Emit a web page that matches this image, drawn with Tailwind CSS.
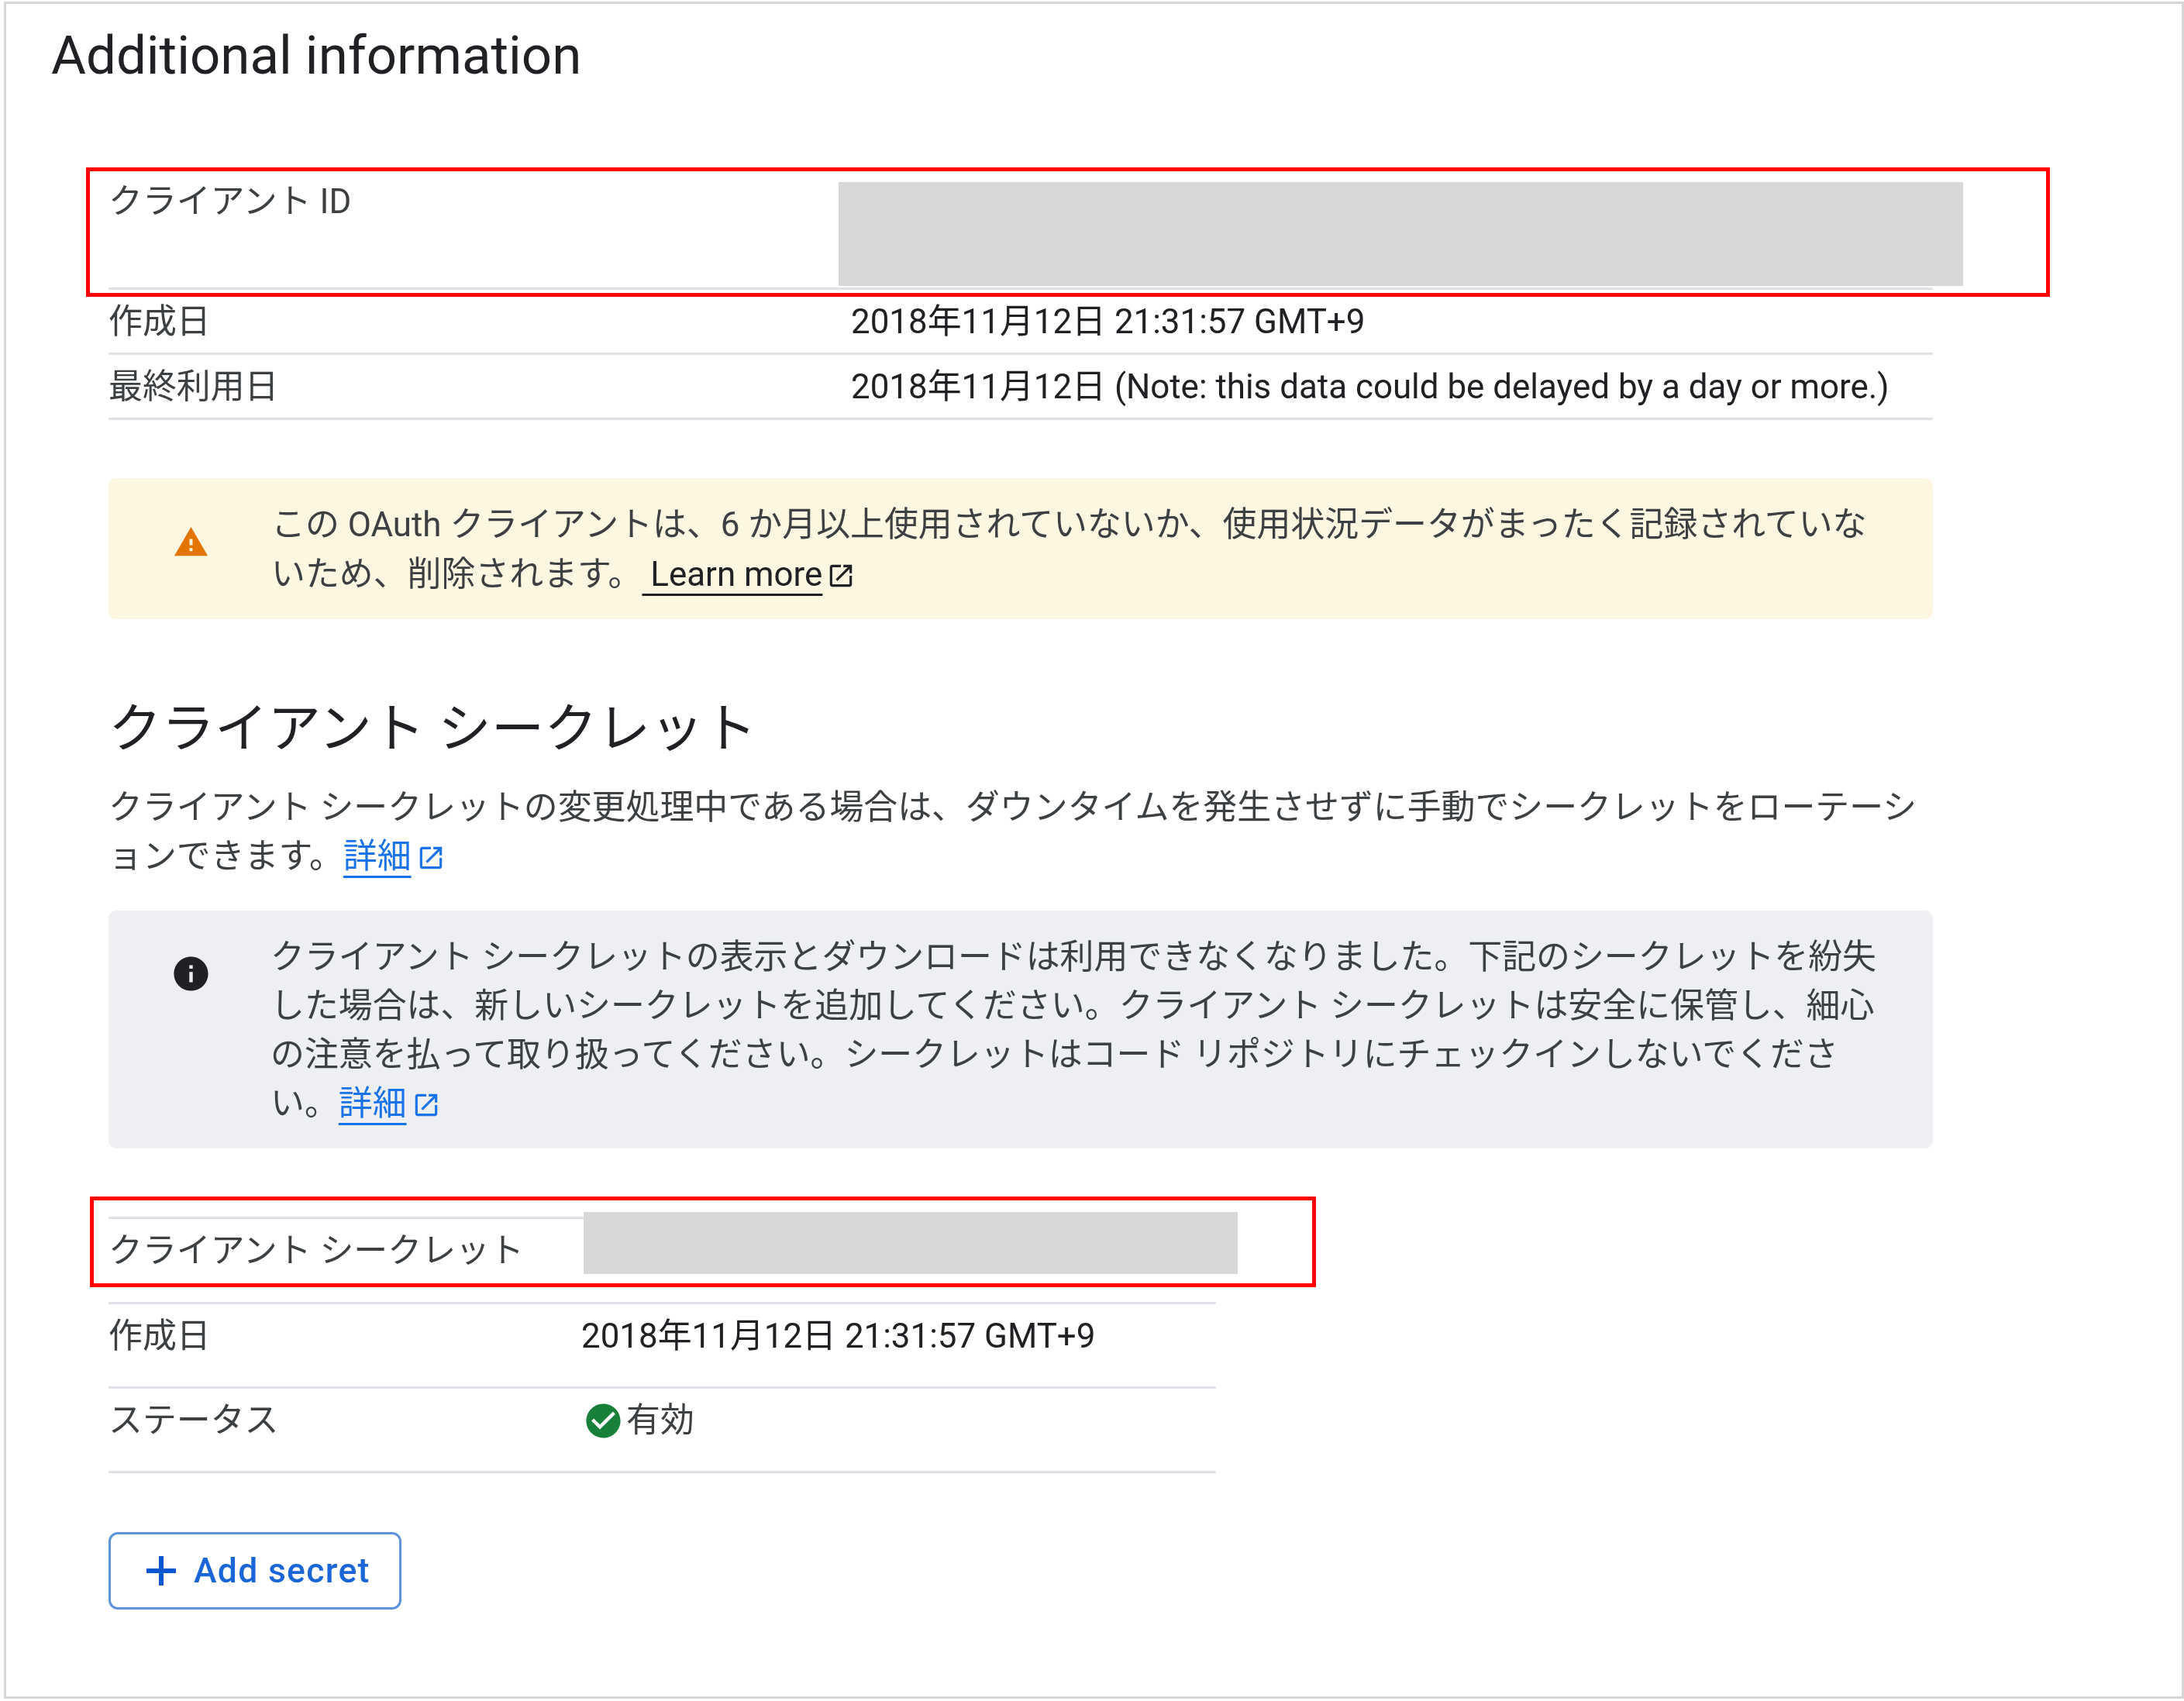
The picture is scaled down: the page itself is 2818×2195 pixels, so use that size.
<!DOCTYPE html>
<html lang="ja">
<head>
  <meta charset="UTF-8" />
  <title>Additional information</title>
  <script src="https://cdn.jsdelivr.net/npm/@tailwindcss/browser@4"></script>
</head>
<body class="bg-white font-['Roboto','Noto_Sans_CJK_JP',sans-serif] text-[#3c4043]">
  <div class="relative ml-[5px] mt-[2px] h-[2190px] w-[2813px] border-[3px] border-[#d6d6d6] pl-[132px]">
    <div class="blur-[0.7px]">
    <h1 class="-ml-[74px] pt-[27px] h-[105px] text-[69px] leading-[80px] font-normal text-[#202124]">Additional information</h1>

    <!-- client id -->
    <div class="mt-[113px] w-[2354px] text-[43.9px] leading-[64px]">
      <div class="flex h-[151px] border-b-[3px] border-[#e0e1e6] pt-[5px]">
        <span class="w-[958px]">クライアント ID</span>
      </div>
      <div class="flex h-[84px] items-center border-b-[3px] border-[#e0e1e6]">
        <span class="w-[958px]">作成日</span>
        <span class="text-[#202124]">2018年11月12日 21:31:57 GMT+9</span>
      </div>
      <div class="flex h-[84px] items-center border-b-[3px] border-[#e0e1e6]">
        <span class="w-[958px]">最終利用日</span>
        <span class="text-[#202124]">2018年11月12日 (Note: this data could be delayed by a day or more.)</span>
      </div>
    </div>

    <!-- warning -->
    <div class="mt-[75px] flex h-[182px] w-[2354px] rounded-[10px] bg-[#fdf6e0] pt-[28px] text-[43.9px] leading-[64px]">
      <svg class="ml-[83px] mt-[31px] h-[47px] w-[47px] shrink-0" viewBox="0 0 24 24" fill="#e37400"><path d="M1 21h22L12 2 1 21zm12-3h-2v-2h2v2zm0-4h-2v-4h2v4z"/></svg>
      <p class="ml-[80px] w-[2080px]">この OAuth クライアントは、6 か月以上使用されていないか、使用状況データがまったく記録されていないため、削除されます。<a class="whitespace-pre text-[#202124] underline decoration-[3px] underline-offset-[10px]"> Learn more</a><svg class="ml-[5px] inline h-[38px] w-[38px] align-[-6px]" viewBox="0 0 24 24" fill="#202124"><path d="M19 19H5V5h7V3H5c-1.11 0-2 .9-2 2v14c0 1.1.89 2 2 2h14c1.1 0 2-.9 2-2v-7h-2v7zM14 3v2h3.59l-9.83 9.83 1.41 1.41L19 6.41V10h2V3h-7z"/></svg></p>
    </div>

    <!-- client secret -->
    <h2 class="mt-[97px] h-[85px] text-[68.5px] leading-[90px] font-normal text-[#202124]">クライアント シークレット</h2>
    <p class="mt-[30px] h-[124px] w-[2354px] text-[43.9px] leading-[63px]">クライアント シークレットの変更処理中である場合は、ダウンタイムを発生させずに手動でシークレットをローテーションできます。<a class="text-[#1a73e8] underline decoration-[3px] underline-offset-[10px]">詳細</a><svg class="ml-[6px] inline h-[38px] w-[38px] align-[-6px]" viewBox="0 0 24 24" fill="#1a73e8"><path d="M19 19H5V5h7V3H5c-1.11 0-2 .9-2 2v14c0 1.1.89 2 2 2h14c1.1 0 2-.9 2-2v-7h-2v7zM14 3v2h3.59l-9.83 9.83 1.41 1.41L19 6.41V10h2V3h-7z"/></svg></p>

    <!-- info -->
    <div class="mt-[40px] flex h-[307px] w-[2354px] rounded-[10px] bg-[#eeeff3] pt-[29px] text-[43.9px] leading-[63px]">
      <svg class="ml-[80px] mt-[26px] h-[53px] w-[53px] shrink-0" viewBox="0 0 24 24" fill="#202124"><path d="M12 2C6.48 2 2 6.48 2 12s4.48 10 10 10 10-4.48 10-10S17.52 2 12 2zm1 15h-2v-6h2v6zm0-8h-2V7h2v2z"/></svg>
      <p class="ml-[76px] w-[2090px]">クライアント シークレットの表示とダウンロードは利用できなくなりました。下記のシークレットを紛失した場合は、新しいシークレットを追加してください。クライアント シークレットは安全に保管し、細心の注意を払って取り扱ってください。シークレットはコード リポジトリにチェックインしないでください。<a class="text-[#1a73e8] underline decoration-[3px] underline-offset-[10px]">詳細</a><svg class="ml-[6px] inline h-[38px] w-[38px] align-[-6px]" viewBox="0 0 24 24" fill="#1a73e8"><path d="M19 19H5V5h7V3H5c-1.11 0-2 .9-2 2v14c0 1.1.89 2 2 2h14c1.1 0 2-.9 2-2v-7h-2v7zM14 3v2h3.59l-9.83 9.83 1.41 1.41L19 6.41V10h2V3h-7z"/></svg></p>
    </div>

    <div class="mt-[88px] w-[1429px] border-t-[3px] border-[#e0e1e6] text-[43.9px] leading-[64px]">
      <div class="flex h-[110px] border-b-[3px] border-[#e0e1e6] pt-[9px]">
        <span class="w-[610px]">クライアント シークレット</span>
      </div>
      <div class="flex h-[109px] border-b-[3px] border-[#e0e1e6] pt-[9px]">
        <span class="w-[610px]">作成日</span>
        <span class="text-[#202124]">2018年11月12日 21:31:57 GMT+9</span>
      </div>
      <div class="flex h-[109px] border-b-[3px] border-[#e0e1e6] pt-[9px]">
        <span class="w-[610px]">ステータス</span>
        <svg class="ml-[2px] mt-[6px] h-[53px] w-[53px]" viewBox="0 0 24 24" fill="#188038"><path d="M12 2C6.48 2 2 6.48 2 12s4.48 10 10 10 10-4.48 10-10S17.52 2 12 2zm-2 15l-5-5 1.41-1.41L10 14.17l7.59-7.59L19 8l-9 9z"/></svg>
        <span class="ml-[3px]">有効</span>
      </div>
    </div>

    <button class="mt-[76px] flex h-[100px] w-[378px] items-center rounded-[12px] border-[3px] border-[#5f93dc] pl-[46px] text-[44.5px] tracking-[1.3px] font-medium text-[#1b66d6]">
      <svg class="h-[38px] w-[38px]" viewBox="0 0 38 38" fill="#0b57d0"><path d="M16 0h6v16h16v6H22v16h-6V22H0v-6h16z"/></svg>
      <span class="ml-[23px]">Add secret</span>
    </button>
    </div>

    <!-- redactions and callouts drawn over the page -->
    <div class="absolute left-[1074px] top-[230px] h-[134px] w-[1451px] bg-[#d8d8d8]"></div>
    <div class="absolute left-[745px] top-[1559px] h-[80px] w-[844px] bg-[#d8d8d8]"></div>
    <div class="absolute left-[103px] top-[211px] h-[167px] w-[2534px] border-[5px] border-[#ff0000]"></div>
    <div class="absolute left-[108px] top-[1539px] h-[117px] w-[1582px] border-[5px] border-[#ff0000]"></div>
  </div>
</body>
</html>
